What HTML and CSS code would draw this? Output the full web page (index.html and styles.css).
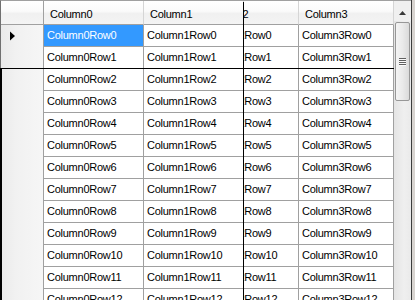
FILE: index.html
```html
<!DOCTYPE html>
<html>
  <head>
    <title>DataGridView</title>
    <meta name="viewport" content="width=device-width, initial-scale=1.0" />
    <link rel="stylesheet" href="styles.css">
  </head>
  <body>
    <div class="frame">
      <div class="view">
        <div class="row head">
          <div class="rh corner"></div>
          <div class="hc">Column0</div>
          <div class="hc">Column1</div>
          <div class="hc c2"><span>Column2</span></div>
          <div class="hc">Column3</div>
        </div>
        <div class="row">
          <div class="rh"><svg class="cur" width="6" height="10" viewBox="0 0 6 10"><polygon points="0,0.5 5,5 0,9.5" fill="#000"/></svg></div>
          <div class="cell sel">Column0Row0</div>
          <div class="cell">Column1Row0</div>
          <div class="cell c2"><span>Column2Row0</span></div>
          <div class="cell">Column3Row0</div>
        </div>
        <div class="row">
          <div class="rh"></div>
          <div class="cell">Column0Row1</div>
          <div class="cell">Column1Row1</div>
          <div class="cell c2"><span>Column2Row1</span></div>
          <div class="cell">Column3Row1</div>
        </div>
        <div class="row">
          <div class="rh"></div>
          <div class="cell">Column0Row2</div>
          <div class="cell">Column1Row2</div>
          <div class="cell c2"><span>Column2Row2</span></div>
          <div class="cell">Column3Row2</div>
        </div>
        <div class="row">
          <div class="rh"></div>
          <div class="cell">Column0Row3</div>
          <div class="cell">Column1Row3</div>
          <div class="cell c2"><span>Column2Row3</span></div>
          <div class="cell">Column3Row3</div>
        </div>
        <div class="row">
          <div class="rh"></div>
          <div class="cell">Column0Row4</div>
          <div class="cell">Column1Row4</div>
          <div class="cell c2"><span>Column2Row4</span></div>
          <div class="cell">Column3Row4</div>
        </div>
        <div class="row">
          <div class="rh"></div>
          <div class="cell">Column0Row5</div>
          <div class="cell">Column1Row5</div>
          <div class="cell c2"><span>Column2Row5</span></div>
          <div class="cell">Column3Row5</div>
        </div>
        <div class="row">
          <div class="rh"></div>
          <div class="cell">Column0Row6</div>
          <div class="cell">Column1Row6</div>
          <div class="cell c2"><span>Column2Row6</span></div>
          <div class="cell">Column3Row6</div>
        </div>
        <div class="row">
          <div class="rh"></div>
          <div class="cell">Column0Row7</div>
          <div class="cell">Column1Row7</div>
          <div class="cell c2"><span>Column2Row7</span></div>
          <div class="cell">Column3Row7</div>
        </div>
        <div class="row">
          <div class="rh"></div>
          <div class="cell">Column0Row8</div>
          <div class="cell">Column1Row8</div>
          <div class="cell c2"><span>Column2Row8</span></div>
          <div class="cell">Column3Row8</div>
        </div>
        <div class="row">
          <div class="rh"></div>
          <div class="cell">Column0Row9</div>
          <div class="cell">Column1Row9</div>
          <div class="cell c2"><span>Column2Row9</span></div>
          <div class="cell">Column3Row9</div>
        </div>
        <div class="row">
          <div class="rh"></div>
          <div class="cell">Column0Row10</div>
          <div class="cell">Column1Row10</div>
          <div class="cell c2"><span>Column2Row10</span></div>
          <div class="cell">Column3Row10</div>
        </div>
        <div class="row">
          <div class="rh"></div>
          <div class="cell">Column0Row11</div>
          <div class="cell">Column1Row11</div>
          <div class="cell c2"><span>Column2Row11</span></div>
          <div class="cell">Column3Row11</div>
        </div>
        <div class="row">
          <div class="rh"></div>
          <div class="cell">Column0Row12</div>
          <div class="cell">Column1Row12</div>
          <div class="cell c2"><span>Column2Row12</span></div>
          <div class="cell">Column3Row12</div>
        </div>
      </div>
      <div class="vscroll">
        <div class="sb-btn"><svg width="7" height="4" viewBox="0 0 7 4"><polygon points="3.5,0 7,4 0,4" fill="#3a3a3a"/></svg></div>
        <div class="thumb"><div class="grip"></div></div>
      </div>
      <div class="mark-v"></div>
      <div class="mark-h"></div>
      <div class="mark-l"></div>
    </div>
  </body>
</html>
```
FILE: styles.css
```css
* {
  box-sizing: border-box;
}
html,
body {
  margin: 0;
}
body {
  width: 415px;
  height: 300px;
  overflow: hidden;
  background: #d8d4d0;
  font-family: "Liberation Sans", Arial, sans-serif;
  font-size: 11px;
  letter-spacing: -0.25px;
  color: #000;
}
.frame {
  position: relative;
  display: flex;
  width: 412px;
  height: 300px;
  border-right: 1px solid #3c3c3c;
}
.view {
  width: 394px;
  height: 300px;
  overflow: hidden;
  background: #fff;
  border-top: 1px solid #a0a0a0;
  border-left: 1px solid #707070;
}
.row {
  display: grid;
  grid-template-columns: 43px 100px 100px 55px 95px;
  height: 22px;
}
.row.head {
  height: 24px;
}
.rh {
  border-right: 1px solid #a0a0a0;
  background: linear-gradient(to right, #eaeaea 0%, #f1f1f1 35%, #f6f6f6 100%);
  padding-left: 9px;
  display: flex;
  align-items: center;
}
.rh.corner {
  border-bottom: 1px solid #a0a0a0;
  background: linear-gradient(to bottom, #ffffff 0%, #fafafa 45%, #f0f0f0 55%, #f4f4f4 100%);
}
.hc {
  border-right: 1px solid #d5d5d5;
  border-bottom: 1px solid #a0a0a0;
  background: linear-gradient(to bottom, #ffffff 0%, #fafafa 45%, #f0f0f0 55%, #f4f4f4 100%);
  padding: 3px 0 0 6px;
  line-height: 20px;
  white-space: nowrap;
  overflow: hidden;
}
.cell {
  border-right: 1px solid #a0a0a0;
  border-bottom: 1px solid #a0a0a0;
  padding-left: 3px;
  line-height: 21px;
  white-space: nowrap;
  overflow: hidden;
}
.cell.sel {
  background: #3399ff;
  color: #fff;
}
.hc.c2,
.cell.c2 {
  padding-left: 0;
}
.hc.c2 span {
  margin-left: -38px;
}
.cell.c2 span {
  margin-left: -42px;
}
.vscroll {
  width: 17px;
  height: 300px;
  border-top: 1px solid #a0a0a0;
  background: linear-gradient(to right, #e4e4e4, #efefef 60%, #eaeaea);
  display: flex;
  flex-direction: column;
}
.sb-btn {
  height: 20px;
  padding-top: 10px;
  display: flex;
  justify-content: center;
  align-items: flex-start;
  background: #f0f0f0;
}
.thumb {
  margin: 1px 1px 0 1px;
  height: 79px;
  border: 1px solid #979797;
  border-radius: 2px;
  background: linear-gradient(to right, #f4f4f4, #eaeaea 50%, #dadada);
  display: flex;
  align-items: center;
  justify-content: center;
}
.grip {
  width: 7px;
  height: 8px;
  background: repeating-linear-gradient(to bottom, #606060 0, #606060 1px, #fafafa 1px, #fafafa 2px);
}
.mark-v,
.mark-h,
.mark-l {
  position: absolute;
  background: #000;
}
.mark-v {
  left: 243px;
  top: 2px;
  bottom: 0;
  width: 1px;
}
.mark-h {
  left: 0;
  top: 68px;
  width: 394px;
  height: 1px;
}
.mark-l {
  left: 0;
  top: 68px;
  bottom: 0;
  width: 2px;
}
```
